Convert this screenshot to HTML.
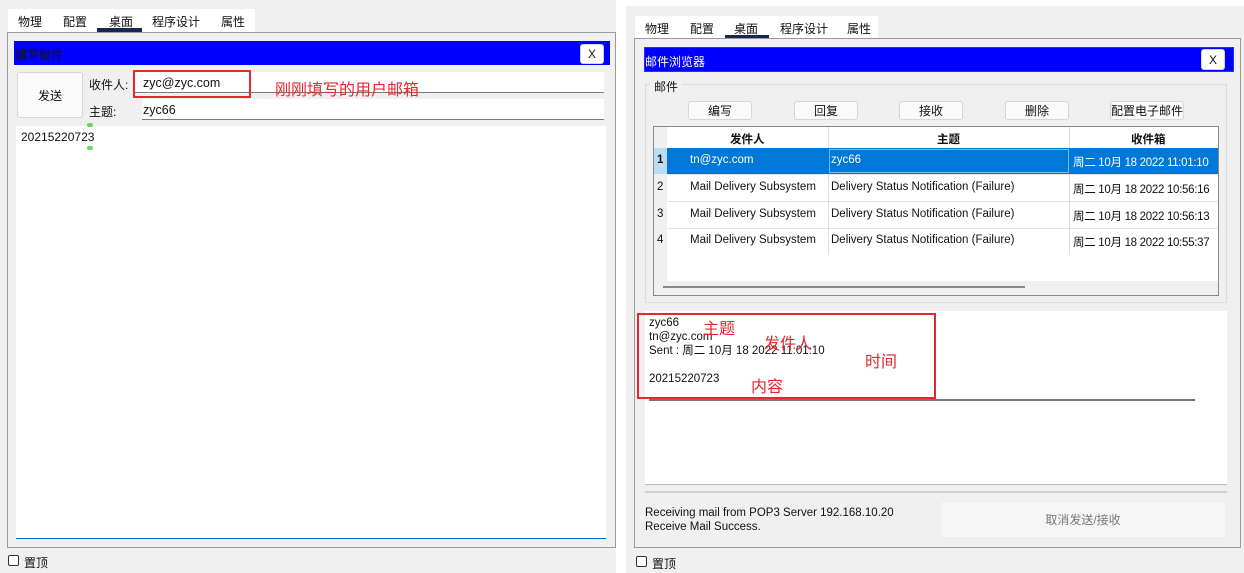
<!DOCTYPE html>
<html><head><meta charset="utf-8"><style>
*{box-sizing:border-box;margin:0;padding:0}
body{width:1244px;height:573px;background:#fff;position:relative;overflow:hidden;font-family:"Liberation Sans","Noto Sans CJK SC",sans-serif;font-size:11.5px;color:#111}
.a{position:absolute}
.tab{position:absolute;font-size:12px}
.btn{position:absolute;background:#fafafa;border:1px solid #d6d6d6;border-radius:3px;text-align:center;font-size:12px}
.red{position:absolute;border:2px solid #e8262e}
.rt{position:absolute;color:#e8262e;font-size:16px}
.cell{position:absolute;white-space:nowrap;overflow:hidden;font-size:11.5px}
</style></head><body>
<!-- LEFT -->
<div class="a" style="left:0;top:0;width:616px;height:573px;background:#f0f0f0"></div>
<div class="a" style="left:8px;top:9px;width:247px;height:23px;background:#fff"></div>
<div class="tab" style="left:18px;top:13px">物理</div>
<div class="tab" style="left:63px;top:13px">配置</div>
<div class="tab" style="left:109px;top:13px">桌面</div>
<div class="a" style="left:97px;top:28px;width:45px;height:4px;background:#16294a"></div>
<div class="tab" style="left:152px;top:13px">程序设计</div>
<div class="tab" style="left:221px;top:13px">属性</div>
<div class="a" style="left:7px;top:32px;width:609px;height:516px;border:1px solid #9a9a9a"></div>
<div class="a" style="left:14px;top:41px;width:596px;height:24px;background:#0000ff"></div>
<div class="a" style="left:15px;top:46px;font-size:12px">编写邮件</div>
<div class="btn" style="left:580px;top:44px;width:24px;height:20px;line-height:18px;background:#fff">X</div>
<div class="btn" style="top:72px;height:46px;line-height:46px;left:17px;width:66px">发送</div>
<div class="a" style="left:89px;top:76px;font-size:12px">收件人:</div>
<div class="a" style="left:89px;top:103px;font-size:12px">主题:</div>
<div class="a" style="left:134px;top:72px;width:470px;height:21px;background:#fff;border-bottom:1px solid #7a7a7a"></div>
<div class="a" style="left:143px;top:76px;font-size:12.5px">zyc@zyc.com</div>
<div class="a" style="left:142px;top:99px;width:462px;height:21px;background:#fff;border-bottom:1px solid #7a7a7a"></div>
<div class="a" style="left:143px;top:103px;font-size:12.5px">zyc66</div>
<div class="red" style="left:133px;top:70px;width:118px;height:28px"></div>
<div class="rt" style="left:275px;top:76px">刚刚填写的用户邮箱</div>
<div class="a" style="left:16px;top:126px;width:590px;height:413px;background:#fff;border-bottom:1px solid #0a64c8"></div>
<div class="a" style="left:21px;top:130px;font-size:12px">20215220723</div>
<div class="a" style="left:87px;top:123px;width:6px;height:4px;border-radius:3px;background:#5ee05e"></div>
<div class="a" style="left:87px;top:146px;width:6px;height:4px;border-radius:3px;background:#5ee05e"></div>
<div class="a" style="left:8px;top:555px;width:11px;height:11px;border:1px solid #333;border-radius:2px;background:#fff"></div>
<div class="a" style="left:24px;top:554px;font-size:12px">置顶</div>
<!-- RIGHT -->
<div class="a" style="left:626px;top:6px;width:618px;height:567px;background:#f0f0f0"></div>
<div class="a" style="left:635px;top:16px;width:243px;height:22px;background:#fff"></div>
<div class="tab" style="left:645px;top:20px">物理</div>
<div class="tab" style="left:690px;top:20px">配置</div>
<div class="tab" style="left:734px;top:20px">桌面</div>
<div class="a" style="left:725px;top:35px;width:44px;height:4px;background:#16294a"></div>
<div class="tab" style="left:780px;top:20px">程序设计</div>
<div class="tab" style="left:847px;top:20px">属性</div>
<div class="a" style="left:634px;top:38px;width:607px;height:510px;border:1px solid #9a9a9a"></div>
<div class="a" style="left:644px;top:47px;width:590px;height:25px;background:#0000ff;border:1px solid #2b2bff"></div>
<div class="a" style="left:645px;top:53px;color:#fff;font-size:12px">邮件浏览器</div>
<div class="btn" style="left:1201px;top:49px;width:24px;height:21px;line-height:20px;background:#fff">X</div>
<div class="a" style="left:645px;top:84px;width:582px;height:219px;border:1px solid #dcdcdc"></div>
<div class="a" style="left:650px;top:78px;background:#f0f0f0;padding:0 4px;font-size:12px">邮件</div>
<div class="btn" style="left:688px;top:101px;width:64px;height:19px;line-height:18px">编写</div>
<div class="btn" style="left:794px;top:101px;width:64px;height:19px;line-height:18px">回复</div>
<div class="btn" style="left:899px;top:101px;width:64px;height:19px;line-height:18px">接收</div>
<div class="btn" style="left:1005px;top:101px;width:64px;height:19px;line-height:18px">删除</div>
<div class="btn" style="left:1110px;top:101px;width:74px;height:19px;line-height:18px">配置电子邮件</div>
<div class="a" style="left:653px;top:126px;width:566px;height:170px;border:1px solid #888;background:#f0f0f0"></div>
<div class="a" style="left:667px;top:127px;width:551px;height:154px;background:#fff"></div>
<div class="a" style="left:667px;top:148px;width:551px;height:107px;background:repeating-linear-gradient(#fff 0 26px,#e4e4e4 26px 27px)"></div>
<div class="a" style="left:828px;top:127px;width:1px;height:128px;background:#ddd"></div>
<div class="a" style="left:1069px;top:127px;width:1px;height:128px;background:#ddd"></div>
<div class="cell" style="left:730px;top:131px;font-weight:bold">发件人</div>
<div class="cell" style="left:937px;top:131px;font-weight:bold">主题</div>
<div class="cell" style="left:1131px;top:131px;font-weight:bold">收件箱</div>
<div class="a" style="left:654px;top:148px;width:13px;height:26px;background:#bcdcf4"></div>
<div class="a" style="left:667px;top:148px;width:551px;height:26px;background:#0078d7"></div>
<div class="a" style="left:829px;top:149px;width:240px;height:24px;border:1px solid #60c0f0"></div>
<div class="cell" style="left:657px;top:154px;font-weight:bold">1</div>
<div class="cell" style="left:690px;top:154px;color:#fff">tn@zyc.com</div>
<div class="cell" style="left:831px;top:154px;color:#fff">zyc66</div>
<div class="cell" style="left:1073px;top:154px;color:#fff;width:145px;letter-spacing:-0.3px">周二 10月 18 2022 11:01:10</div>
<div class="cell" style="left:657px;top:181px">2</div>
<div class="cell" style="left:690px;top:181px">Mail Delivery Subsystem</div>
<div class="cell" style="left:831px;top:181px">Delivery Status Notification (Failure)</div>
<div class="cell" style="left:1073px;top:181px;width:145px;letter-spacing:-0.3px">周二 10月 18 2022 10:56:16</div>
<div class="cell" style="left:657px;top:208px">3</div>
<div class="cell" style="left:690px;top:208px">Mail Delivery Subsystem</div>
<div class="cell" style="left:831px;top:208px">Delivery Status Notification (Failure)</div>
<div class="cell" style="left:1073px;top:208px;width:145px;letter-spacing:-0.3px">周二 10月 18 2022 10:56:13</div>
<div class="cell" style="left:657px;top:234px">4</div>
<div class="cell" style="left:690px;top:234px">Mail Delivery Subsystem</div>
<div class="cell" style="left:831px;top:234px">Delivery Status Notification (Failure)</div>
<div class="cell" style="left:1073px;top:234px;width:145px;letter-spacing:-0.3px">周二 10月 18 2022 10:55:37</div>
<div class="a" style="left:663px;top:286px;width:362px;height:2px;background:#888"></div>
<div class="a" style="left:645px;top:311px;width:582px;height:174px;background:#fff;border-bottom:1px solid #bbb"></div>
<div class="a" style="left:649px;top:316px;line-height:14px">zyc66<br>tn@zyc.com<br>Sent : 周二 10月 18 2022 11:01:10<br><br>20215220723</div>
<div class="a" style="left:649px;top:399px;width:546px;height:2px;background:#777"></div>
<div class="red" style="left:637px;top:313px;width:299px;height:86px"></div>
<div class="rt" style="left:703px;top:315px">主题</div>
<div class="rt" style="left:764px;top:330px">发件人</div>
<div class="rt" style="left:865px;top:348px">时间</div>
<div class="rt" style="left:751px;top:373px">内容</div>
<div class="a" style="left:645px;top:491px;width:582px;height:2px;background:#d0d0d0"></div>
<div class="a" style="left:645px;top:506px;line-height:14px">Receiving mail from POP3 Server 192.168.10.20<br>Receive Mail Success.</div>
<div class="btn" style="left:940px;top:501px;width:286px;height:37px;line-height:36px;color:#777;background:#f6f6f6;border-color:#eee">取消发送/接收</div>
<div class="a" style="left:636px;top:556px;width:11px;height:11px;border:1px solid #333;border-radius:2px;background:#fff"></div>
<div class="a" style="left:652px;top:555px;font-size:12px">置顶</div>
</body></html>
